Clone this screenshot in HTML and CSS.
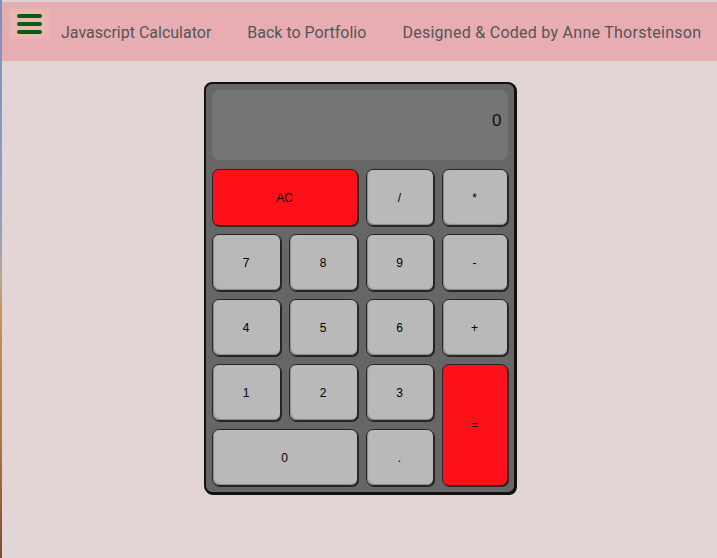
FILE: index.html
```html
<!DOCTYPE html>
<html lang="en">
<head>
<meta charset="utf-8">
<title>Javascript Calculator</title>
<link rel="stylesheet" href="styles.css">
</head>
<body>
<div class="page">
  <header class="topbar">
    <button class="menu" aria-label="Menu">
      <span class="bar"></span><span class="bar"></span><span class="bar"></span>
    </button>
    <nav class="nav">
      <a class="nav-item">Javascript Calculator</a>
      <a class="nav-item">Back to Portfolio</a>
      <a class="nav-item credit">Designed &amp; Coded by Anne Thorsteinson</a>
    </nav>
  </header>
  <main class="main">
    <div class="calc">
      <div class="display">0</div>
      <div class="keys">
        <button class="key red wide">AC</button>
        <button class="key">/</button>
        <button class="key">*</button>
        <button class="key">7</button>
        <button class="key">8</button>
        <button class="key">9</button>
        <button class="key">-</button>
        <button class="key">4</button>
        <button class="key">5</button>
        <button class="key">6</button>
        <button class="key">+</button>
        <button class="key">1</button>
        <button class="key">2</button>
        <button class="key">3</button>
        <button class="key red tall">=</button>
        <button class="key wide">0</button>
        <button class="key">.</button>
      </div>
    </div>
  </main>
</div>
</body>
</html>
```
FILE: styles.css
```css
html {
  height: 100%;
  background: linear-gradient(to bottom, #7d90b8 0%, #93a0bb 40%, #b7a796 50%, #c8955c 55%, #a87548 80%, #7a4e32 100%);
}
body {
  margin: 0 0 0 2px;
  height: 100%;
  font-family: Roboto, "Liberation Sans", Arial, sans-serif;
}
.page {
  height: 100%;
  box-sizing: border-box;
  background: #e3d5d6;
  border-top: 2px solid #dad6d6;
  display: flex;
  flex-direction: column;
  overflow: hidden;
}
.topbar {
  height: 59px;
  background: #e8adb2;
  display: flex;
  align-items: center;
  padding-left: 8px;
}
.menu {
  flex-shrink: 0;
  width: 39px;
  height: 30px;
  margin-top: -15px;
  border: none;
  padding: 0;
  background: #eab7b4;
  display: flex;
  flex-direction: column;
  align-items: center;
  justify-content: center;
  gap: 4px;
}
.bar {
  display: block;
  width: 25px;
  height: 4px;
  border-radius: 2px;
  background: #0c5b12;
}
.nav {
  display: flex;
  padding-top: 2px;
}
.nav-item {
  flex-shrink: 0;
  color: #555555;
  font-size: 16px;
  padding: 0 18px 0 12px;
  margin-right: 6px;
  white-space: nowrap;
}
.nav-item.credit {
  letter-spacing: 0.27px;
  padding-right: 0;
  margin-right: 0;
}
.main {
  display: flex;
  justify-content: center;
  padding-top: 21px;
}
.calc {
  width: 296px;
  padding: 6px;
  background: #666666;
  border: 2px solid #111111;
  border-radius: 8px;
  box-shadow: 1px 1px 0 #111111;
  display: flex;
  flex-direction: column;
  gap: 9px;
}
.display {
  height: 70px;
  box-sizing: border-box;
  background: #757575;
  border-radius: 8px;
  display: flex;
  align-items: center;
  justify-content: flex-end;
  padding: 0 6px 8px 0;
  font-size: 17px;
  color: #111111;
  font-family: "Liberation Sans", Arial, sans-serif;
}
.keys {
  display: grid;
  grid-template-columns: 69px 69px 68px 66px;
  grid-template-rows: repeat(5, 57px);
  gap: 8px;
}
.key {
  margin: 0;
  padding: 0;
  background: #b9b9b9;
  border: 1px solid #262626;
  border-radius: 7px;
  box-shadow: 1px 1px 0 #262626, inset 1px -1px 1px #8a8a8a;
  font-family: "Liberation Sans", Arial, sans-serif;
  font-size: 12px;
  color: #000000;
}
.key.red {
  background: #fe1019;
  box-shadow: 1px 1px 0 #262626;
}
.key.wide {
  grid-column: span 2;
}
.key.tall {
  grid-row: span 2;
}
```
